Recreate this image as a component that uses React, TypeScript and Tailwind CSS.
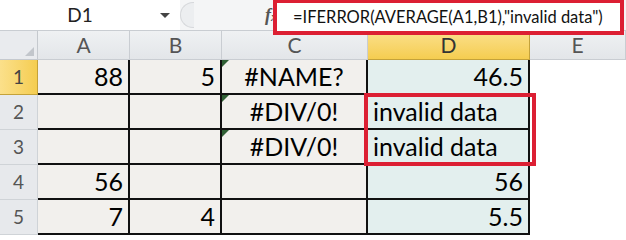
import React from "react";

const font = { fontFamily: "Lato, 'Open Sans', sans-serif" };

type Cell = { text?: string; align?: "left" | "right" | "center"; tri?: boolean };

const rows: { n: string; sel?: boolean; cells: Cell[] }[] = [
  { n: "1", sel: true, cells: [{ text: "88", align: "right" }, { text: "5", align: "right" }, { text: "#NAME?", align: "center", tri: true }, { text: "46.5", align: "right" }] },
  { n: "2", cells: [{}, {}, { text: "#DIV/0!", align: "center", tri: true }, { text: "invalid data", align: "left" }] },
  { n: "3", cells: [{}, {}, { text: "#DIV/0!", align: "center", tri: true }, { text: "invalid data", align: "left" }] },
  { n: "4", cells: [{ text: "56", align: "right" }, {}, {}, { text: "56", align: "right" }] },
  { n: "5", cells: [{ text: "7", align: "right" }, { text: "4", align: "right" }, {}, { text: "5.5", align: "right" }] },
];

export default function App() {
  return (
    <div className="relative w-[626px] h-[240px] overflow-hidden bg-white text-black" style={font}>
      {/* formula bar */}
      <div className="flex items-stretch h-[31px] border-b border-[#c9cdd2]">
        <div className="flex w-[160px] items-center justify-center bg-white text-[19px] text-[#222]">D1</div>
        <div className="flex w-[20px] items-center justify-start bg-white">
          <span className="w-0 h-0 border-l-[5px] border-r-[5px] border-t-[5px] border-l-transparent border-r-transparent border-t-[#444]" />
        </div>
        <div className="flex flex-1 items-center bg-[#f4f5f6] py-[2px]">
          <div className="w-[14px] h-full rounded-l-full border border-r-0 border-[#d6d8db] bg-[#eceef0]" />
          <span
            className="ml-[71px] text-[18px] italic font-bold text-[#555]"
            style={{ fontFamily: "'Liberation Serif', serif" }}
          >
            f<span className="text-[12px]">x</span>
          </span>
        </div>
      </div>
      {/* grid */}
      <div className="grid grid-cols-[38px_92px_92px_146px_162px_96px] grid-rows-[29px_35px_35px_35px_35px_35px]">
        <div className="flex items-end justify-end p-[3px] bg-[#e9ebee] border-r border-b border-[#c5c9ce]">
          <span className="w-0 h-0 border-l-[9px] border-b-[9px] border-l-transparent border-b-[#c2c6cb]" />
        </div>
        {["A", "B", "C", "D", "E"].map((c) => (
          <div
            key={c}
            className={
              "flex items-center justify-center text-[21px] border-r border-b " +
              (c === "D"
                ? "bg-gradient-to-b from-[#fbe08a] to-[#f5cd4f] text-[#333] border-[#c4a23a]"
                : "bg-gradient-to-b from-[#eff1f3] to-[#e3e6e9] text-[#555] border-[#c9cdd2]")
            }
          >
            {c}
          </div>
        ))}
        {rows.map((r) => (
          <React.Fragment key={r.n}>
            <div
              className={
                "flex items-center justify-center text-[19px] border-r border-b " +
                (r.sel
                  ? "bg-gradient-to-r from-[#fbe08a] to-[#f5cd4f] text-[#444] border-[#c4a23a]"
                  : "bg-[#e7e9ec] text-[#555] border-[#cfd3d7]")
              }
            >
              {r.n}
            </div>
            {r.cells.map((c, i) => (
              <div
                key={i}
                className={
                  "relative flex items-center text-[25px] leading-none border-r-2 border-b-2 border-[#111] px-[5px] " +
                  (i === 3 ? "bg-[#e3efee] " : "bg-[#f2f0ed] ") +
                  (c.align === "right" ? "justify-end" : c.align === "center" ? "justify-center" : "justify-start")
                }
              >
                {c.tri && (
                  <span className="absolute left-0 top-0 w-0 h-0 border-t-[7px] border-r-[7px] border-t-[#2f5f35] border-r-transparent" />
                )}
                {c.text}
              </div>
            ))}
            <div className="bg-white" />
          </React.Fragment>
        ))}
      </div>
      {/* highlight boxes */}
      <div className="absolute left-[273px] top-[-1px] w-[351px] h-[36px] border-[4px] border-[#dc1f33] bg-white p-[1px]">
        <div className="flex h-full items-center pl-[15px] text-[16.5px] text-[#111] whitespace-nowrap bg-white">
          =IFERROR(AVERAGE(A1,B1),"invalid data")
        </div>
      </div>
      <div className="absolute left-[364px] top-[93px] w-[172px] h-[73px] border-[4px] border-[#dc1f33]" />
    </div>
  );
}
